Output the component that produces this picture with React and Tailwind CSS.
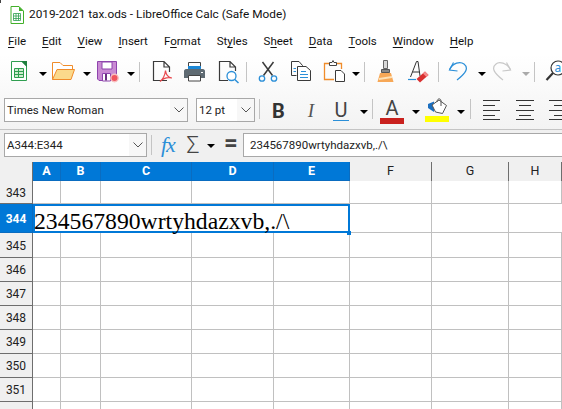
const ui = { fontFamily: 'Roboto, "Noto Sans", sans-serif' };

const menus = [
  { pre: "", key: "F", post: "ile", cls: "ml-[8px]" },
  { pre: "", key: "E", post: "dit", cls: "ml-[16px]" },
  { pre: "", key: "V", post: "iew", cls: "ml-[16px]" },
  { pre: "", key: "I", post: "nsert", cls: "ml-[16px]" },
  { pre: "F", key: "o", post: "rmat", cls: "ml-[16px]" },
  { pre: "St", key: "y", post: "les", cls: "ml-[16px]" },
  { pre: "S", key: "h", post: "eet", cls: "ml-[16px]" },
  { pre: "", key: "D", post: "ata", cls: "ml-[16px]" },
  { pre: "", key: "T", post: "ools", cls: "ml-[16px]" },
  { pre: "", key: "W", post: "indow", cls: "ml-[16px]" },
  { pre: "", key: "H", post: "elp", cls: "ml-[16px]" },
];

const Icon = ({ x, w, y = 58, h = 26, className = "", children }) => (
  <svg
    width={w}
    height={h}
    viewBox={`${x} ${y} ${w} ${h}`}
    fill="none"
    className={`shrink-0 ${className}`}
  >
    {children}
  </svg>
);

const Caret = ({ className = "", top = "mt-[14px]", color = "fill-black" }) => (
  <svg width="8" height="4" viewBox="0 0 8 4" className={`shrink-0 ${top} ${className}`}>
    <path d="M0 0H8L4 4Z" className={color} />
  </svg>
);

const Sep = ({ className = "", h = "h-[20px] mt-[4px]" }) => (
  <div className={`w-px shrink-0 bg-[#c4c4c4] ${h} ${className}`} />
);

const Chevron = () => (
  <svg width="10" height="6" viewBox="0 0 10 6" fill="none">
    <path d="M0.5 0.5L5 5L9.5 0.5" stroke="#555" />
  </svg>
);

const Combo = ({ text, className, btn = "w-[17px]" }) => (
  <div className={`flex h-[24px] shrink-0 border border-[#a8a8a8] bg-white ${className}`}>
    <div className="flex-1 pl-[2px] text-[11.5px] leading-[22px] text-[#222]">{text}</div>
    <div className={`flex items-center justify-center bg-[#f7f7f7] ${btn}`}>
      <Chevron />
    </div>
  </div>
);

const AlignLines = ({ x, rows, className }) => (
  <Icon x={x} w={18} y={96} h={26} className={className}>
    {rows.map(([a, b, yy]) => (
      <path key={yy} d={`M${a} ${yy}.5H${b}`} stroke="#333" />
    ))}
  </Icon>
);

const cols = [
  { label: "A", w: "w-[28px]", on: true },
  { label: "B", w: "w-[40px]", on: true },
  { label: "C", w: "w-[91px]", on: true },
  { label: "D", w: "w-[82px]", on: true },
  { label: "E", w: "w-[76px]", on: true },
  { label: "F", w: "w-[82px]" },
  { label: "G", w: "w-[77px]" },
  { label: "H", w: "w-[53px]" },
];

const RowHead = ({ n, on }) => (
  <div
    className={`flex w-[33px] shrink-0 items-center justify-center border-r border-b pt-px text-[12px] ${
      on
        ? "border-[#0a6cc0] bg-[#0078d7] font-bold text-white"
        : "border-[#6e6e6e] bg-[#f0f0f0] text-[#222]"
    }`}
  >
    {n}
  </div>
);

const Row = ({ n, h }) => (
  <div className={`flex ${h}`}>
    <RowHead n={n} />
    {cols.map((c) => (
      <div key={c.label} className={`shrink-0 border-r border-b border-[#c0c0c0] bg-white ${c.w}`} />
    ))}
  </div>
);

export default function App() {
  return (
    <div className="relative h-[409px] w-[562px] overflow-hidden bg-white" style={ui}>
      <div className="absolute top-0 left-0 h-[3px] w-px bg-[#444]" />
      {/* title bar */}
      <div className="flex h-[30px] items-center">
        <svg width="14" height="18" viewBox="0 0 14 18" fill="none" className="ml-[10px] mb-[1px]">
          <path d="M1 .5H9L13.5 5V17.5H1Z" fill="#fff" stroke="#43b02a" />
          <path d="M9 .5L13.5 5H9Z" fill="#43b02a" />
          <path d="M3.5 7.5H10.5V14.5H3.5ZM3.5 10H10.5M3.5 12.5H10.5M6 7.5V14.5M8.5 7.5V14.5" stroke="#2e9e4f" strokeWidth=".8" />
        </svg>
        <span className="ml-[5px] text-[11.8px] text-[#111]">
          2019-2021 tax.ods - LibreOffice Calc (Safe Mode)
        </span>
      </div>

      {/* menu bar */}
      <div className="flex h-[24px] items-center text-[11.5px] text-[#111]">
        {menus.map((m) => (
          <span key={m.key + m.post} className={m.cls}>
            {m.pre}
            <span className="underline underline-offset-2">{m.key}</span>
            {m.post}
          </span>
        ))}
      </div>

      <div className="bg-linear-to-b from-white to-[#f3f3f3]">
        {/* standard toolbar */}
        <div className="flex h-[40px] items-start pt-[4px]">
          <Icon x={10} w={18} className="ml-[10px]">
            <path d="M11.5 61.5H22L26.5 66V80.5H11.5Z" fill="#fff" stroke="#2f9e50" />
            <path d="M21 61H27V67Z" fill="#1f7f3f" />
            <path d="M14.5 68.5H23.5V77.5H14.5Z" fill="#cdeccd" stroke="#2f9e50" />
            <path d="M14.5 71.5H23.5M14.5 74.5H23.5M18.5 68.5V77.5" stroke="#2f9e50" />
          </Icon>
          <Caret className="ml-[11px]" />
          <Icon x={51} w={25} className="ml-[4px]">
            <path d="M52.5 79.5V62.5H60L63 65.5H72.5V69" fill="#fff" stroke="#f08c2a" />
            <path d="M52.5 79.5H71L74.5 69.5H57Z" fill="#fbd98b" stroke="#f08c2a" />
          </Icon>
          <Caret className="ml-[7px]" />
          <Icon x={96} w={23} className="ml-[5px]">
            <path d="M97.5 61.5H116.5V80.5H99L97.5 79Z" fill="#c98bd3" stroke="#8e44ad" />
            <path d="M102 62H112V69H102Z" fill="#fff" stroke="#8e44ad" />
            <path d="M102.5 73.5H110.5V81H102.5Z" fill="#fff" stroke="#8e44ad" />
            <path d="M105 74V80.5H107V74Z" fill="#6a2f80" />
            <circle cx="114.5" cy="78" r="3.7" fill="#f0555f" stroke="#f7c0c0" strokeWidth="1.4" />
          </Icon>
          <Caret className="ml-[8px]" />
          <Sep className="ml-[4px]" />
          <Icon x={152} w={20} className="ml-[12px]">
            <path d="M167 80.5H153.5V61.5H164L169.5 67V72M164 61.5V67H169.5" stroke="#3a3a3a" strokeWidth="1.2" />
            <path d="M160 81.5C163 79 165 75 165.5 70.5C166 75 168 77.5 172 78C168 77 163.5 78 160 81.5Z" stroke="#e8474c" strokeWidth="1.2" />
          </Icon>
          <Icon x={183} w={23} className="ml-[11px]">
            <path d="M188.5 62.5H200.5V70H188.5Z" fill="#fff" stroke="#444" />
            <path d="M188 66H201V70H188Z" fill="#1b87d6" />
            <path d="M184 71C184 70 185 69 186 69H203C204 69 205 70 205 71V78H184Z" fill="#5f6b73" />
            <path d="M188.5 75.5H200.5V81H188.5Z" fill="#fff" stroke="#444" />
            <path d="M201 72H203V73H201Z" fill="#fff" />
          </Icon>
          <Icon x={218} w={22} className="ml-[12px]">
            <path d="M228 80.5H219.5V61.5H230L235.5 67V71M230 61.5V67H235.5" stroke="#3a3a3a" strokeWidth="1.2" />
            <circle cx="231.5" cy="76" r="4.5" fill="#fff" stroke="#2b8fd8" strokeWidth="1.3" />
            <path d="M234.8 79.5L238.5 83" stroke="#2b8fd8" strokeWidth="1.5" />
          </Icon>
          <Sep className="ml-[6px]" />
          <Icon x={258} w={20} className="ml-[11px]">
            <path d="M262.5 62L272.5 75.5M273.5 62L263.5 75.5" stroke="#3a3a3a" strokeWidth="1.5" />
            <circle cx="262" cy="78.5" r="2.7" stroke="#2b8fd8" strokeWidth="1.3" />
            <circle cx="274" cy="78.5" r="2.7" stroke="#2b8fd8" strokeWidth="1.3" />
          </Icon>
          <Icon x={290} w={22} className="ml-[12px]">
            <path d="M296.5 75.5H291.5V61.5H299L302.5 65.5V66" stroke="#3a3a3a" />
            <path d="M297.5 66.5H306L310.5 70.5V80.5H297.5Z" fill="#fff" stroke="#3a3a3a" />
            <path d="M293.5 68.5H296M293.5 71.5H296M301 71.5H306M300 74.5H308M300 77.5H308" stroke="#2b8fd8" />
          </Icon>
          <Icon x={323} w={24} className="ml-[11px]">
            <path d="M334 79.5H324.5V63.5H341.5V69" stroke="#f08c2a" strokeWidth="1.3" />
            <path d="M329.5 65.5V62.5H332L333 60.5L334 62.5H336.5V65.5Z" fill="#fff" stroke="#444" />
            <path d="M335.5 70.5H341L344.5 74V81.5H335.5Z" fill="#fff" stroke="#3a3a3a" />
          </Icon>
          <Caret className="ml-[5px]" />
          <Sep className="ml-[4px]" />
          <Icon x={377} w={18} className="ml-[12px]">
            <path d="M383.5 60.5H387.5V68.5H383.5Z" fill="#d8d8d8" stroke="#666" />
            <path d="M381.5 69.5H389.5V72.5H381.5Z" fill="#888" stroke="#555" />
            <path d="M380 73H391L393.5 82H377.5Z" fill="#f7a857" />
            <path d="M379 78L392 76V78L379 80Z" fill="#fde2b8" />
          </Icon>
          <Icon x={408} w={22} className="ml-[13px]">
            <path d="M410.5 77L416.5 61.5H418L420 76M412.5 72H419.5" stroke="#333" />
            <path d="M408 79.5H416" stroke="#2b8fd8" strokeWidth="1.2" />
            <path d="M416.5 79L425 71.5L428.5 75L420 82.5Z" fill="#d93030" />
            <path d="M423 73.5L425 71.5L428.5 75L426.5 77Z" fill="#f58a8a" />
          </Icon>
          <Sep className="ml-[8px]" />
          <Icon x={447} w={21} className="ml-[8px]">
            <path d="M449.5 69.5C453 63 460 61 464 64C469 68 466 73 457 80" stroke="#2b8fd8" strokeWidth="1.2" />
            <path d="M453.5 62.5L449.5 70L457.5 71" stroke="#2b8fd8" strokeWidth="1.2" />
          </Icon>
          <Caret className="ml-[10px]" />
          <Icon x={492} w={20} className="ml-[6px]">
            <path d="M510.5 69.5C507 63 499 61 496 64C491 68 494 73 503 80" stroke="#c8c8c8" strokeWidth="1.2" />
            <path d="M506.5 62.5L510.5 70L502.5 71" stroke="#c8c8c8" strokeWidth="1.2" />
          </Icon>
          <Caret className="ml-[10px]" color="fill-[#aaaaaa]" />
          <Sep className="ml-[4px]" />
          <Icon x={545} w={17} className="ml-[10px]">
            <circle cx="558" cy="68" r="7" fill="#fff" stroke="#333" strokeWidth="1.2" />
            <path d="M553 73L546.5 80" stroke="#333" strokeWidth="2.2" />
            <text x="554.5" y="72" fontSize="12" fill="#2b8fd8" fontFamily="Noto Sans">a</text>
          </Icon>
        </div>

        {/* formatting toolbar */}
        <div className="flex h-[35px] items-start pt-[4px]">
          <Combo text="Times New Roman" className="ml-[4px] w-[184px]" />
          <Combo text="12 pt" className="ml-[8px] w-[59px]" />
          <Sep className="ml-[4px]" h="h-[20px] mt-[1px]" />
          <span className="ml-[12px] w-[14px] text-center text-[20px] leading-[26px] font-bold text-[#333]">B</span>
          <span className="ml-[23px] w-[10px] text-center text-[19px] leading-[26px] text-[#555] italic [font-family:Liberation_Serif,serif]">I</span>
          <div className="ml-[19px] flex w-[16px] flex-col items-center">
            <span className="text-[20px] leading-[24px] text-[#444]">U</span>
            <div className="-mt-[2px] h-px w-[16px] bg-[#2b8fd8]" />
          </div>
          <Caret className="ml-[11px]" top="mt-[12px]" />
          <Sep className="ml-[4px]" h="h-[20px] mt-[1px]" />
          <div className="ml-[7px] flex w-[24px] flex-col items-center">
            <span className="text-[20px] leading-[20px] text-[#444]">A</span>
            <div className="h-[6px] w-[24px] bg-[#c9211e]" />
          </div>
          <Caret className="ml-[8px]" top="mt-[12px]" />
          <Icon x={428} w={24} y={98} h={24} className="ml-[5px]">
            <path d="M431 108L431 104L437 101.5L437 112Z" fill="#1b6fc0" />
            <path d="M435 105L442 100L449.5 105.5L445.5 113.5L438.5 112Z" fill="#fff" stroke="#555" />
            <path d="M440 102C440 98 444 98 444 101V106" stroke="#555" />
            <path d="M428 116H452V122H428Z" fill="#ffff00" />
          </Icon>
          <Caret className="ml-[8px]" top="mt-[12px]" />
          <Sep className="ml-[5px]" h="h-[20px] mt-[1px]" />
          <AlignLines
            x={485}
            className="ml-[12px] -mt-[2px]"
            rows={[[485, 502, 100], [485, 497, 105], [485, 502, 110], [485, 497, 115], [485, 502, 119]]}
          />
          <AlignLines
            x={518}
            className="ml-[15px] -mt-[2px]"
            rows={[[518, 536, 100], [521, 533, 105], [518, 536, 110], [521, 533, 115], [518, 536, 119]]}
          />
          <AlignLines
            x={551}
            className="ml-[15px] -mt-[2px]"
            rows={[[551, 569, 100], [556, 569, 105], [551, 569, 110], [556, 569, 115], [551, 569, 119]]}
          />
        </div>
      </div>

      {/* formula bar */}
      <div className="flex h-[33px] items-start border-t border-[#c4c4c4] bg-[#f0f0f0] pt-[3px]">
        <Combo text="A344:E344" className="ml-[4px] w-[143px]" />
        <Sep className="ml-[4px]" h="h-[20px] mt-[2px]" />
        <span className="ml-[9px] w-[18px] text-[22px] leading-[24px] tracking-[-1px] text-[#2b8fd8] italic [font-family:Liberation_Serif,serif]">fx</span>
        <span className="mt-[3px] ml-[6px] w-[16px] text-center text-[23px] leading-[20px] font-light text-[#444]">Σ</span>
        <Caret className="ml-[6px]" top="mt-[11px]" />
        <span className="ml-[9px] w-[14px] text-center text-[24px] leading-[20px] font-bold text-[#444]">=</span>
        <div className="ml-[5px] h-[24px] flex-1 border-y border-l border-[#a8a8a8] bg-white pl-[6px] text-[11.5px] leading-[22px] text-[#222]">
          {"234567890wrtyhdazxvb,./\\"}
        </div>
      </div>

      {/* sheet */}
      <div className="flex h-[19px] text-[12.5px]">
        <div className="w-[33px] shrink-0 border-r border-[#6e6e6e] bg-[#f0f0f0]" />
        {cols.map((c) => (
          <div
            key={c.label}
            className={`flex shrink-0 items-center justify-center ${c.w} ${
              c.on
                ? "border-r border-b border-[#0a6cc0] bg-[#0078d7] font-bold text-white"
                : "border-r border-[#6e6e6e] bg-[#f0f0f0] text-[#222]"
            }`}
          >
            {c.label}
          </div>
        ))}
      </div>
      <Row n={343} h="h-[23px]" />
      <div className="flex h-[29px]">
        <RowHead n={344} on />
        <div className="relative w-[317px] shrink-0 border-2 border-[#0078d7] bg-white pt-[3px] pl-0 text-[23.7px] leading-[24px] whitespace-nowrap text-black [font-family:Liberation_Serif,serif]">
          <span className="-ml-px">{"234567890wrtyhdazxvb,./\\"}</span>
          <div className="absolute -right-[3px] -bottom-[4px] h-[4px] w-[4px] bg-[#0078d7]" />
        </div>
        <div className="w-[82px] shrink-0 border-r border-b border-[#c0c0c0]" />
        <div className="w-[77px] shrink-0 border-r border-b border-[#c0c0c0]" />
        <div className="w-[53px] shrink-0 border-b border-[#c0c0c0]" />
      </div>
      <Row n={345} h="h-[25px]" />
      <Row n={346} h="h-[24px]" />
      <Row n={347} h="h-[24px]" />
      <Row n={348} h="h-[24px]" />
      <Row n={349} h="h-[24px]" />
      <Row n={350} h="h-[24px]" />
      <Row n={351} h="h-[24px]" />
      <Row n="" h="h-[24px]" />
    </div>
  );
}
